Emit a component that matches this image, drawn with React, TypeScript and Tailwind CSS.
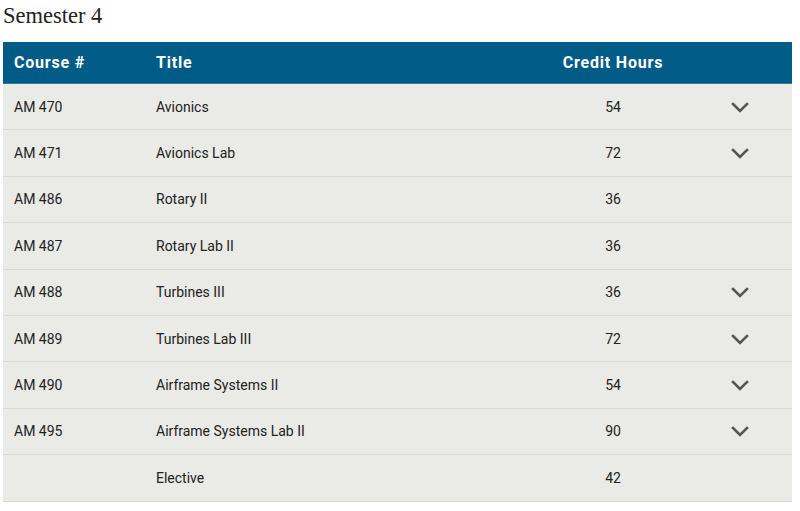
import React from 'react';

interface Course {
  code: string;
  title: string;
  hours: number;
  expandable: boolean;
}

const courses: Course[] = [
  { code: 'AM 470', title: 'Avionics', hours: 54, expandable: true },
  { code: 'AM 471', title: 'Avionics Lab', hours: 72, expandable: true },
  { code: 'AM 486', title: 'Rotary II', hours: 36, expandable: false },
  { code: 'AM 487', title: 'Rotary Lab II', hours: 36, expandable: false },
  { code: 'AM 488', title: 'Turbines III', hours: 36, expandable: true },
  { code: 'AM 489', title: 'Turbines Lab III', hours: 72, expandable: true },
  { code: 'AM 490', title: 'Airframe Systems II', hours: 54, expandable: true },
  { code: 'AM 495', title: 'Airframe Systems Lab II', hours: 90, expandable: true },
  { code: '', title: 'Elective', hours: 42, expandable: false },
];

function Chevron() {
  return (
    <svg width="18" height="11" viewBox="0 0 18 11" fill="none">
      <path d="M2 2l7 7 7-7" stroke="#555555" strokeWidth="2.6" strokeLinecap="square" />
    </svg>
  );
}

export default function App() {
  return (
    <div className="w-[800px] h-[511px] bg-white pl-[3px] pr-[8px] [font-family:Roboto,'Liberation_Sans',sans-serif]">
      <h2 className="pt-[2px] h-[42px] text-[22.5px] leading-[28px] text-[#222] [font-family:'Liberation_Serif',serif]">
        Semester 4
      </h2>

      <div className="grid grid-cols-[142px_400px_136px_1fr] h-[42px] items-center bg-[#005b86] text-white font-bold text-[16px] tracking-[0.8px] border-b border-[#2d7aa0]">
        <div className="pl-[11px]">Course #</div>
        <div className="pl-[11px]">Title</div>
        <div className="text-center">Credit Hours</div>
        <div />
      </div>

      {courses.map((c, i) => (
        <div
          key={i}
          className="grid grid-cols-[142px_400px_136px_1fr] h-[46.4px] items-center pt-[1px] bg-[#eaeae6] border-b border-[#d9d9d5] text-[14px] text-[#222]"
        >
          <div className="pl-[11px]">{c.code}</div>
          <div className="pl-[11px]">{c.title}</div>
          <div className="text-center">{c.hours}</div>
          <div className="flex justify-center pl-[7px]">{c.expandable && <Chevron />}</div>
        </div>
      ))}
    </div>
  );
}
